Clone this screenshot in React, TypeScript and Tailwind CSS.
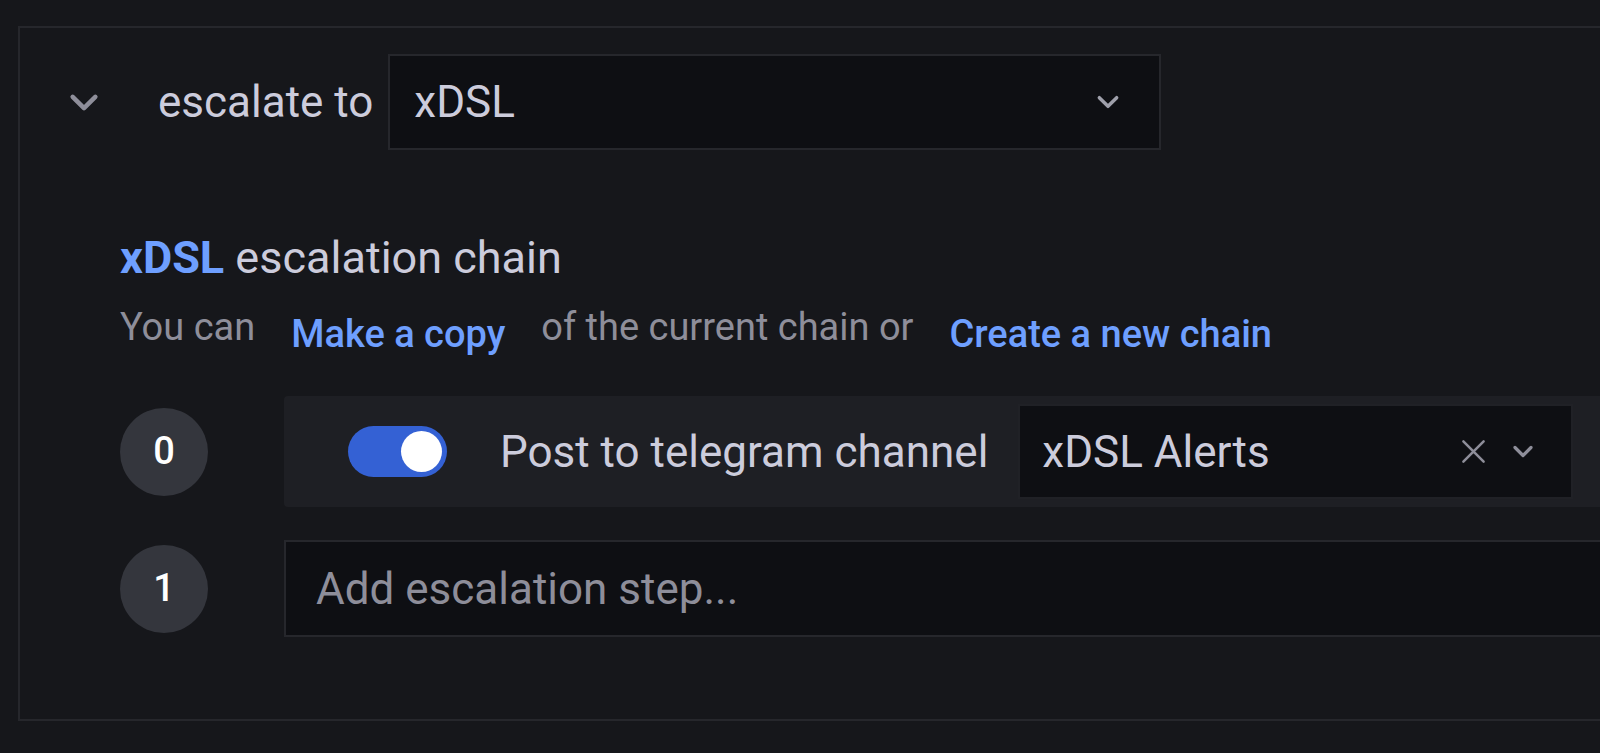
import React from "react";

function AngleDown({ className }: { className?: string }) {
  return (
    <svg viewBox="0 0 24 16" className={className} fill="none">
      <path d="M4 4l8 8 8-8" stroke="currentColor" strokeWidth="3.2" strokeLinecap="round" strokeLinejoin="round" />
    </svg>
  );
}

function Times({ className }: { className?: string }) {
  return (
    <svg viewBox="0 0 24 24" className={className} fill="none">
      <path d="M3 3l18 18M21 3L3 21" stroke="currentColor" strokeWidth="2.2" strokeLinecap="round" />
    </svg>
  );
}

function StepNumber({ n }: { n: number }) {
  return (
    <div className="flex h-[88px] w-[88px] shrink-0 items-center justify-center rounded-full bg-[#34363d] text-[38px] font-medium text-white">
      {n}
    </div>
  );
}

export default function App() {
  return (
    <div
      className="h-[753px] w-[1600px] overflow-hidden bg-[#16171b] pl-[18px] pt-[26px] text-[#ccccdc]"
      style={{ fontFamily: "Roboto, 'Liberation Sans', sans-serif" }}
    >
      <div className="h-[695px] w-[1700px] border-2 border-[#26272c] bg-[#16171b]">
        {/* escalate to */}
        <div className="flex items-center pt-[26px]">
          <AngleDown className="ml-[47px] h-[23px] w-[34px] text-[#8e8e9a]" />
          <span className="ml-[57px] text-[44px] leading-none text-[#ccccdc]">escalate to</span>
          <div className="ml-[15px] flex h-[96px] w-[773px] items-center border-2 border-[#26272c] bg-[#0e0f13] pl-[24px] pr-[38px]">
            <span className="text-[44px] text-[#ccccdc]">xDSL</span>
            <AngleDown className="ml-auto h-[18px] w-[26px] text-[#9fa0ab]" />
          </div>
        </div>

        {/* chain title */}
        <div className="pl-[100px] pt-[82px]">
          <div className="text-[45px] leading-[52px]">
            <span className="font-bold text-[#6e9fff]">xDSL</span>
            <span> escalation chain</span>
          </div>
          <div className="mt-[21px] flex items-start gap-[36px] text-[38px] leading-[44px]">
            <span className="text-[#8e8e9a]">You can</span>
            <span className="mt-[7px] font-medium text-[#6e9fff]">Make a copy</span>
            <span className="text-[#8e8e9a]">of the current chain or</span>
            <span className="mt-[7px] font-medium text-[#6e9fff]">Create a new chain</span>
          </div>

          {/* steps */}
          <div className="mt-[40px] flex flex-col gap-[33px]">
            <div className="flex items-center gap-[76px]">
              <StepNumber n={0} />
              <div className="flex h-[111px] flex-1 items-center rounded-[4px] bg-[#1e1f24] pl-[64px]">
                <div className="flex h-[51px] w-[99px] items-center justify-end rounded-full bg-[#3461d4] pr-[5px]">
                  <div className="h-[41px] w-[41px] rounded-full bg-white" />
                </div>
                <span className="ml-[53px] text-[44px] text-[#ccccdc]">Post to telegram channel</span>
                <div className="ml-[30px] flex h-[95px] w-[555px] items-center border-2 border-[#202126] bg-[#0e0f13] pl-[22px] pr-[36px]">
                  <span className="text-[44px] text-[#ccccdc]">xDSL Alerts</span>
                  <Times className="ml-auto h-[27px] w-[27px] text-[#8e8e9a]" />
                  <AngleDown className="ml-[24px] h-[17px] w-[24px] text-[#8e8e9a]" />
                </div>
              </div>
            </div>
            <div className="flex items-center gap-[76px]">
              <StepNumber n={1} />
              <div className="flex h-[97px] flex-1 items-center border-2 border-[#26272c] bg-[#0e0f13] pl-[30px]">
                <span className="text-[44px] text-[#8e8e9a]">Add escalation step...</span>
              </div>
            </div>
          </div>
        </div>
      </div>
    </div>
  );
}
